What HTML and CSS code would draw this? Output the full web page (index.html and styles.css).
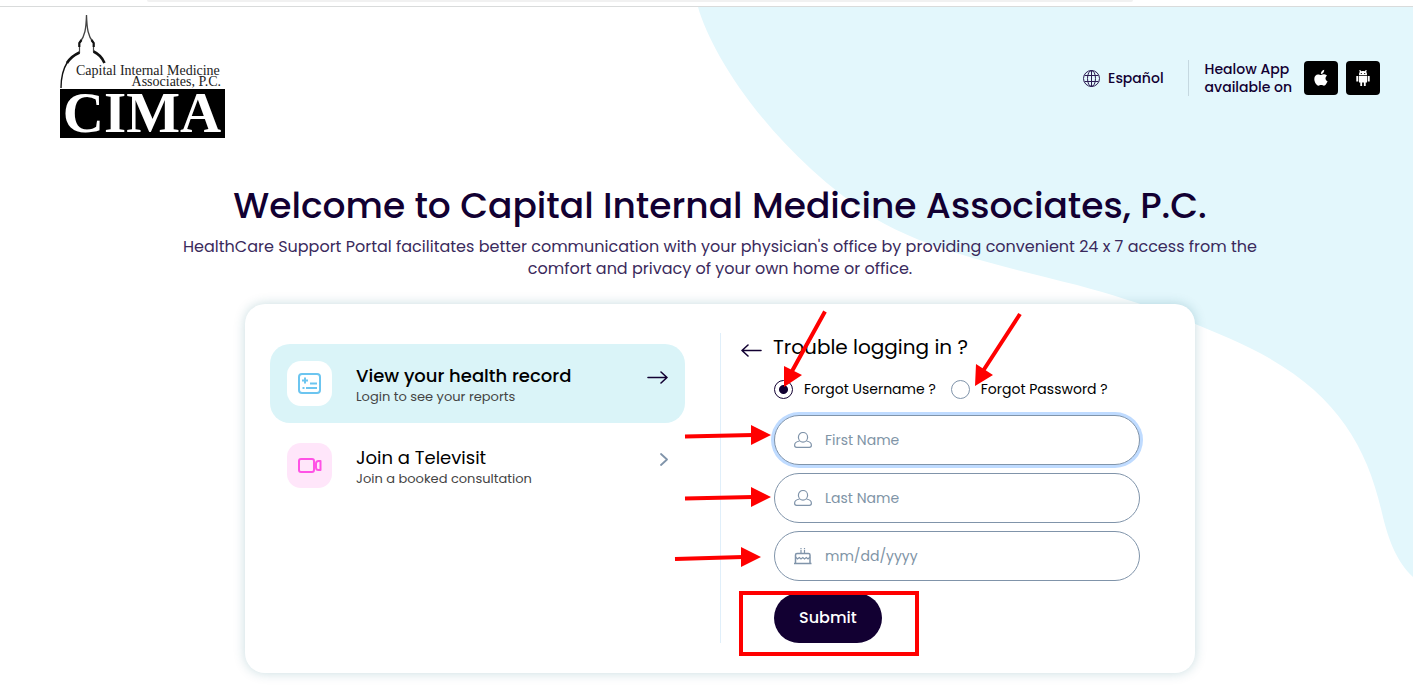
FILE: index.html
```html
<!DOCTYPE html>
<html lang="en">
<head>
<meta charset="utf-8">
<title>Capital Internal Medicine Associates, P.C. - Patient Portal</title>
<link rel="stylesheet" href="styles.css">
</head>
<body>
<div class="browser-edge"><div class="address-bar"></div></div>
<div class="page">
  <svg class="blob" viewBox="0 0 715 570" aria-hidden="true"><path fill="#e3f7fc" d="M0 0C14 50 75 145 176 211C230 243 300 258 379 278C445 296 500 316 552 341C635 382 668 435 684 506C691 536 700 556 715 570V0Z"/></svg>
  <header class="header">
    <svg class="logo" viewBox="0 0 165 123" role="img" aria-label="CIMA">
      <g fill="none" stroke="#111">
        <path stroke="#444" stroke-width="1.3" d="M26.500 0C26 14 25 21 20 27M26.500 0C27 14 28 21 33 27"/>
        <path stroke-width="2.200" d="M21.500 25L19.300 28V32M31.500 25L33.700 28V32"/>
        <path stroke="#444" stroke-width="1.200" d="M19.500 32V38M33.500 32V37"/>
        <path stroke-width="1.400" d="M7.500 47C3 54 1 62 1 73"/>
        <path stroke-width="2.600" d="M19.500 37.500C14 40 10 43 7 48M33.500 36.500C39 39 42 42 44.500 48"/>
      </g>
      <text x="16" y="60" class="logo-line" font-size="14">Capital Internal Medicine</text>
      <text x="161" y="71" class="logo-line" font-size="14" text-anchor="end">Associates, P.C.</text>
      <rect y="74" width="165" height="49"/>
      <text x="82" y="117" class="logo-name" font-size="57" text-anchor="middle">CIMA</text>
    </svg>
    <div class="tools">
      <a class="language" href="#">
        <svg width="17" height="17" viewBox="0 0 17 17" fill="none" stroke="#2b1b52" aria-hidden="true"><circle cx="8.500" cy="8.500" r="8"/><ellipse cx="8.500" cy="8.500" rx="4" ry="8"/><path d="M8.500 .5v16M1.500 5.500h14M1.500 11.500h14"/></svg>
        Español
      </a>
      <div class="apps">
        <span class="apps-label">Healow App<br>available on</span>
        <a class="store" href="#" aria-label="App Store"><svg width="16" height="18" viewBox="0 0 16 18" fill="#fff" aria-hidden="true"><path d="M8 6C9 5.700 10 5.100 11.300 5.300C12.500 5.400 13.500 6 14 6.800C12 8.100 11.900 11.100 14.500 12.300C14 13.900 12.500 16.700 11 16.700C9.900 16.700 9.500 16.100 8.200 16.100C6.900 16.100 6.400 16.700 5.400 16.700C3.500 16.700 1.300 13 1.300 10C1.300 7 3.100 5.400 5 5.400C6.200 5.400 7.200 6 8 6ZM7.900 5C7.800 3 9.300 1.100 11.200 .7C11.500 2.900 9.800 5 7.900 5Z"/></svg></a>
        <a class="store" href="#" aria-label="Google Play"><svg width="16" height="18" viewBox="0 0 16 18" fill="#fff" aria-hidden="true"><path d="M4 6.200C4 4.500 4.200 3.600 4.800 3L4.200 1.200L5.200 1L6.200 2.300C7.200 2 8.800 2 9.800 2.300L10.800 1L11.800 1.200L11.200 3C11.800 3.600 12 4.500 12 6.200ZM4 7H12V13.500H10.700V17H8.900V13.500H7.100V17H5.300V13.500H4ZM1.300 7H3.300V12.500H1.300ZM12.700 7H14.700V12.500H12.700Z"/><path fill="#000" d="M5.800 4h1v1h-1zM9.200 4h1v1h-1z"/></svg></a>
      </div>
    </div>
  </header>
  <main class="main">
    <h1>Welcome to Capital Internal Medicine Associates, P.C.</h1>
    <p class="intro">HealthCare Support Portal facilitates better communication with your physician's office by providing convenient 24 x 7 access from the comfort and privacy of your own home or office.</p>
    <section class="card">
      <nav class="options">
        <a class="option option-active" href="#">
          <span class="option-icon"><svg width="23" height="21" viewBox="0 0 23 21" fill="none" stroke="#6cc5f0" stroke-width="2" aria-hidden="true"><rect x="1" y="1" width="21" height="19" rx="3"/><path d="M4 7.500h6M7 4.500v6M12 10.500h7M4.500 15h2M8 15h11"/></svg></span>
          <span class="option-text"><strong>View your health record</strong><small>Login to see your reports</small></span>
          <svg width="21" height="13" viewBox="0 0 21 13" fill="none" stroke="#120032" stroke-width="1.600" stroke-linecap="round" stroke-linejoin="round" aria-hidden="true"><path d="M1 6.500H20M14 1L20 6.500L14 12"/></svg>
        </a>
        <a class="option" href="#">
          <span class="option-icon option-icon-pink"><svg width="24" height="15" viewBox="0 0 24 15" fill="none" stroke="#ff52e5" stroke-width="2" stroke-linejoin="round" aria-hidden="true"><rect x="1" y="1" width="15" height="13" rx="2"/><path d="M18 5.500Q18 3 20.500 3H22.500V12H20.500Q18 12 18 9.500Z"/></svg></span>
          <span class="option-text"><span class="option-title">Join a Televisit</span><small>Join a booked consultation</small></span>
          <svg width="8" height="13" viewBox="0 0 8 13" fill="none" stroke="#8094aa" stroke-width="1.800" stroke-linecap="round" stroke-linejoin="round" aria-hidden="true"><path d="M1 1L7 6.500L1 12"/></svg>
        </a>
      </nav>
      <div class="recovery">
        <div class="recovery-head">
          <button class="back" type="button" aria-label="Back"><svg width="21" height="13" viewBox="0 0 21 13" fill="none" stroke="#120032" stroke-width="1.600" stroke-linecap="round" stroke-linejoin="round" aria-hidden="true"><path d="M20 6.500H1M7 1L1 6.500L7 12"/></svg></button>
          <h2>Trouble logging in ?</h2>
        </div>
        <form class="form">
          <div class="choices">
            <label><input type="radio" name="forgot" checked>Forgot Username ?</label>
            <label><input type="radio" name="forgot">Forgot Password ?</label>
          </div>
          <label class="field field-focus">
            <svg width="18" height="17" viewBox="0 0 18 17" fill="none" stroke="#8094aa" stroke-width="1.200" aria-hidden="true"><ellipse cx="9" cy="5.300" rx="4.600" ry="4.800"/><path d="M5.500 9C2.500 9.500 .6 11 .6 13.300Q.6 15.300 2.600 15.300H15.400Q17.400 15.300 17.400 13.300C17.400 11 15.500 9.500 12.500 9"/></svg>
            <input type="text" placeholder="First Name" aria-label="First Name">
          </label>
          <label class="field">
            <svg width="18" height="17" viewBox="0 0 18 17" fill="none" stroke="#8094aa" stroke-width="1.200" aria-hidden="true"><ellipse cx="9" cy="5.300" rx="4.600" ry="4.800"/><path d="M5.500 9C2.500 9.500 .6 11 .6 13.300Q.6 15.300 2.600 15.300H15.400Q17.400 15.300 17.400 13.300C17.400 11 15.500 9.500 12.500 9"/></svg>
            <input type="text" placeholder="Last Name" aria-label="Last Name">
          </label>
          <label class="field">
            <svg width="18" height="17" viewBox="0 0 18 17" fill="none" stroke="#8094aa" stroke-width="1.200" aria-hidden="true"><path stroke-width="1.500" d="M0 15.500H17.500M1.500 15V7Q1.500 5.500 3 5.500H14.500Q16 5.500 16 7V15"/><path d="M1.500 9L3.500 11L5.300 9.500L7 11L8.800 9.500L10.500 11L12.300 9.500L14 11L16 9M7 2V5.500M10.500 2V5.500M7 0V1.200M10.500 0V1.200"/></svg>
            <input type="text" placeholder="mm/dd/yyyy" aria-label="Date of birth">
          </label>
          <button class="submit" type="button">Submit</button>
        </form>
      </div>
      <svg class="marks" viewBox="0 0 950 369" aria-hidden="true">
        <g stroke="#f00" stroke-width="4" fill="none">
          <path d="M580 7.500L546 69M775 10L738 67M440 132.500L508 131M440 194.500L508 193M430 255L498 253"/>
          <rect x="496" y="289" width="176" height="61"/>
        </g>
        <path fill="#f00" d="M539 83V62L557 71ZM730 82L731 60L748 71ZM526 131L506 121V141ZM526 193L506 183V203ZM516 253L496 243V263Z"/>
      </svg>
    </section>
  </main>
</div>
</body>
</html>
```
FILE: styles.css
```css
* { box-sizing: border-box; }
body {
  margin: 0;
  background: #fff;
  color: #000;
  font-family: Poppins, Inter, "Open Sans", sans-serif;
}
a { color: inherit; text-decoration: none; }
svg { display: block; flex: none; }

.browser-edge {
  height: 7px;
  padding: 0 280px 0 147px;
  border-bottom: 1px solid #d9dbdb;
}
.address-bar { height: 2px; background: #f1f1f1; border-radius: 0 0 4px 4px; }

.page { position: relative; padding: 8px 33px 17px 60px; }
.blob { position: absolute; z-index: -1; top: 0; right: 0; width: 715px; }

.header { display: flex; justify-content: space-between; align-items: flex-start; }
.logo { width: 165px; overflow: visible; }
.logo-line { font-family: "Liberation Serif", serif; fill: #222; }
.logo-name { font-family: "Liberation Serif", serif; font-weight: 700; fill: #fff; }
.tools {
  display: flex;
  align-items: center;
  padding-top: 45px;
  color: #120032;
  font-size: 14px;
  line-height: 18px;
  font-weight: 500;
}
.language { display: flex; align-items: center; gap: 8px; padding-right: 24px; }
.apps { display: flex; align-items: center; gap: 8px; padding-left: 16px; border-left: 1px solid #c5d8e0; }
.apps-label { padding-right: 4px; }
.store {
  display: grid;
  place-items: center;
  width: 34px;
  height: 34px;
  border-radius: 4px;
  background: #000;
}

.main { display: flex; flex-direction: column; align-items: center; padding-top: 44px; }
h1 { margin: 0; color: #120032; font-size: 36px; line-height: 48px; font-weight: 500; text-align: center; }
.intro {
  max-width: 1120px;
  margin: 6px 0 24px;
  color: #3a2a5c;
  font-size: 16px;
  line-height: 22px;
  text-align: center;
}

.card {
  position: relative;
  display: grid;
  grid-template-columns: 1fr 1fr;
  width: 100%;
  max-width: 950px;
  padding: 29px 0 30px;
  border-radius: 20px;
  background: #fff;
  box-shadow: 0 0 12px rgba(0, 95, 115, 0.22);
}
.options { display: flex; flex-direction: column; gap: 3px; padding: 11px 35px 0 25px; }
.option { display: flex; align-items: center; height: 79px; padding: 0 17px; border-radius: 20px; }
.option-active { background: #daf4f8; }
.option > svg { margin-bottom: 12px; }
.option-icon {
  display: grid;
  place-items: center;
  width: 45px;
  height: 45px;
  border-radius: 14px;
  background: #fff;
}
.option-icon-pink { background: #ffe6fa; }
.option-text { display: flex; flex: 1; flex-direction: column; padding: 2px 0 0 24px; }
.option strong, .option-title { font-size: 18px; line-height: 24px; font-weight: 500; }
.option-title { font-weight: 400; }
.option small { color: #444; font-size: 13px; line-height: 18px; }

.recovery { padding: 0 55px 0 20px; border-left: 1px solid #e0effa; }
.recovery-head { display: flex; align-items: center; gap: 11px; }
.back { padding: 6px 0 0; border: 0; background: none; }
h2 { margin: 0; font-size: 20px; line-height: 28px; font-weight: 400; }
.form { display: flex; flex-direction: column; gap: 8px; padding-left: 33px; }
.choices { display: flex; gap: 15px; padding: 18px 0 8px; font-size: 14px; line-height: 20px; }
.choices label { display: flex; align-items: center; gap: 11px; }
.choices input {
  appearance: none;
  width: 19px;
  height: 19px;
  margin: 0;
  border: 1px solid #8094aa;
  border-radius: 50%;
}
.choices input:checked {
  border-color: #120032;
  background: radial-gradient(circle, #120032 4px, transparent 5px);
}
.field {
  display: flex;
  align-items: center;
  gap: 13px;
  height: 50px;
  padding: 0 19px;
  border: 1px solid #8094aa;
  border-radius: 25px;
  background: #fff;
}
.field-focus { box-shadow: 0 0 0 3px #bfdbff; }
.field input {
  flex: 1;
  min-width: 0;
  padding: 0;
  border: 0;
  outline: 0;
  background: none;
  font: 400 14px/20px Poppins, Inter, "Open Sans", sans-serif;
}
.field input::placeholder { color: #8094a6; opacity: 1; }
.submit {
  align-self: flex-start;
  height: 50px;
  margin-top: 4px;
  padding: 0 25px;
  border: 0;
  border-radius: 25px;
  background: #120032;
  color: #fff;
  font: 500 16px/24px Poppins, Inter, "Open Sans", sans-serif;
}
.marks { position: absolute; top: 0; left: 0; width: 100%; pointer-events: none; }
```
